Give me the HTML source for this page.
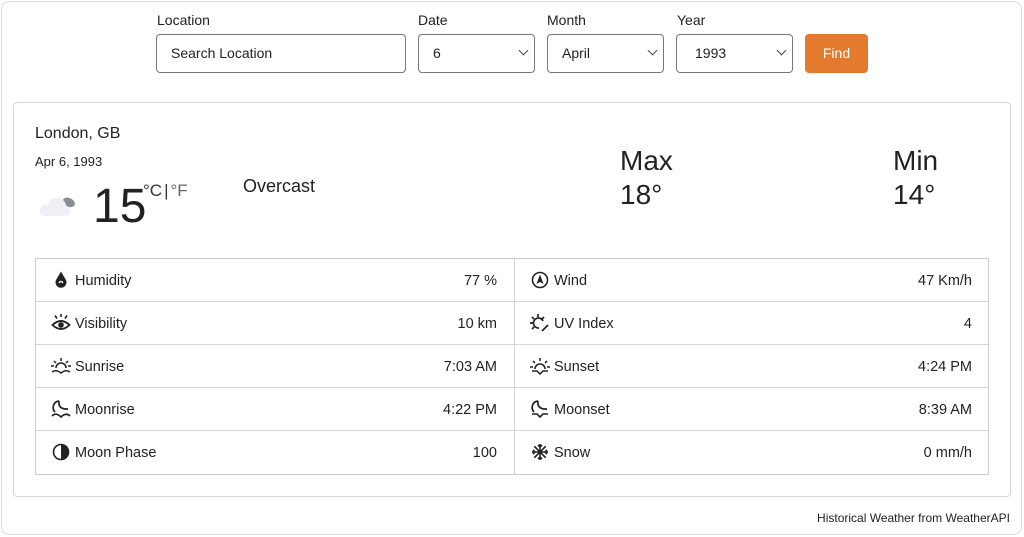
<!DOCTYPE html>
<html><head><meta charset="utf-8"><style>
*{box-sizing:border-box;margin:0;padding:0}
body{width:1024px;height:537px;background:#fff;font-family:"Liberation Sans",sans-serif;color:#222;position:relative;overflow:hidden}
.a{position:absolute}
.outer{left:1px;top:1px;width:1021px;height:534px;border:1px solid #ddd;border-radius:8px}
.lbl{font-size:14px;color:#222}
.inp{border:1px solid #777;border-radius:4px;height:39px;font-size:14px;padding:0 0 0 14px;line-height:37px;color:#222}
.chev{position:absolute;right:7px;top:12px;width:7px;height:7px;border-right:1.3px solid #444;border-bottom:1.3px solid #444;transform:rotate(45deg)}
.btn{left:805px;top:34px;width:63px;height:39px;background:#e47a2e;border-radius:4px;color:#fff;font-size:14px;text-align:center;line-height:39px}
.card{left:13px;top:102px;width:998px;height:395px;border:1px solid #d6d6d6;border-radius:4px}
.tbl{left:35px;top:258px;width:954px;height:217px;border:1px solid #ccc}
.hl{position:absolute;left:0;right:0;height:1px;background:#d4d4d4}
.vl{position:absolute;top:0;bottom:0;left:478px;width:1px;background:#d4d4d4}
.row{position:absolute;height:43px;font-size:14.5px;color:#222;line-height:47px}
.ic{position:absolute;top:13px;width:20px;height:18px}
.r{position:absolute;text-align:right}
</style></head><body>
<div class="a outer"></div>
<div class="a lbl" style="left:157px;top:12px">Location</div>
<div class="a lbl" style="left:418px;top:12px">Date</div>
<div class="a lbl" style="left:547px;top:12px">Month</div>
<div class="a lbl" style="left:677px;top:12px">Year</div>
<div class="a inp" style="left:156px;top:34px;width:250px">Search Location</div>
<div class="a inp" style="left:418px;top:34px;width:117px">6<span class="chev"></span></div>
<div class="a inp" style="left:547px;top:34px;width:117px">April<span class="chev"></span></div>
<div class="a inp" style="left:676px;top:34px;width:117px;padding-left:18px">1993<span class="chev"></span></div>
<div class="a btn">Find</div>

<div class="a card"></div>
<div class="a" style="left:35px;top:125px;font-size:16px">London, GB</div>
<div class="a" style="left:35px;top:154px;font-size:13px">Apr 6, 1993</div>
<svg class="a" style="left:38px;top:192px" width="40" height="26" viewBox="0 0 40 26"><path d="M24 10 Q26 4 31 6 Q36 7 37 12 Q36 16 30 15Z" fill="#8a8d94"/><path d="M6 24 Q0 23 2 17 Q4 12 10 13 Q13 4 21 6 Q28 8 28 15 Q34 16 32 21 Q31 24 27 24 Z" fill="#eef0f5"/></svg>
<div class="a" style="left:93px;top:179px;font-size:48px;color:#222">15</div>
<div class="a" style="left:143px;top:181px;font-size:17px;color:#333">°C<span style="margin:0 2px">|</span><span style="color:#666">°F</span></div>
<div class="a" style="left:243px;top:176px;font-size:18px">Overcast</div>
<div class="a" style="left:620px;top:144px;font-size:28px;line-height:34px">Max<br>18°</div>
<div class="a" style="left:893px;top:144px;font-size:28px;line-height:34px">Min<br>14°</div>

<div class="a tbl">
<div class="hl" style="top:42px"></div><div class="hl" style="top:85px"></div><div class="hl" style="top:128px"></div><div class="hl" style="top:171px"></div>
<div class="vl"></div>
</div>

<div class="a" style="left:35px;top:258px;width:479px">
<div class="row" style="top:0;left:0;width:479px"><svg class="ic" style="left:16px" viewBox="0 0 20 18"><path d="M10 0.5 L5 9 A5.5 5.5 0 1 0 15 9 Z" fill="#222"/><path d="M8 12 Q10 9 12 12" stroke="#fff" stroke-width="1.4" fill="none"/></svg><span style="position:absolute;left:40px">Humidity</span><span class="r" style="right:17px">77 %</span></div>
<div class="row" style="top:43px;left:0;width:479px"><svg class="ic" style="left:16px" viewBox="0 0 20 18"><path d="M1.5 11 Q10 3 18.5 11 Q10 19 1.5 11Z" stroke="#222" stroke-width="1.8" fill="none"/><circle cx="10" cy="11" r="2.8" fill="#222"/><path d="M10 0v3M4 1.5l2 3M16 1.5l-2 3" stroke="#222" stroke-width="1.6"/></svg><span style="position:absolute;left:40px">Visibility</span><span class="r" style="right:17px">10 km</span></div>
<div class="row" style="top:86px;left:0;width:479px"><svg class="ic" style="left:16px" viewBox="0 0 20 18"><path d="M5 11 A5 5 0 0 1 15 11" stroke="#222" stroke-width="1.6" fill="none"/><path d="M10 1v3M3 4l2 2M17 4l-2 2M0 9h3M17 9h3M1 15 Q5 12 10 16 Q15 12 19 15" stroke="#222" stroke-width="1.5" fill="none"/></svg><span style="position:absolute;left:40px">Sunrise</span><span class="r" style="right:17px">7:03 AM</span></div>
<div class="row" style="top:129px;left:0;width:479px"><svg class="ic" style="left:16px" viewBox="0 0 20 18"><path d="M8 1 A6.5 6.5 0 0 0 4 12 M8 1 Q7 8 14 9 L17 9" stroke="#222" stroke-width="1.7" fill="none"/><path d="M1 16 Q5 12 10 17 Q15 12 19 16" stroke="#222" stroke-width="1.6" fill="none"/></svg><span style="position:absolute;left:40px">Moonrise</span><span class="r" style="right:17px">4:22 PM</span></div>
<div class="row" style="top:172px;left:0;width:479px"><svg class="ic" style="left:16px" viewBox="0 0 20 18"><circle cx="10" cy="9" r="7.5" stroke="#222" stroke-width="1.6" fill="none"/><path d="M10 1.5 A7.5 7.5 0 0 1 10 16.5Z" fill="#222"/></svg><span style="position:absolute;left:40px">Moon Phase</span><span class="r" style="right:17px">100</span></div>
</div>
<div class="a" style="left:514px;top:258px;width:475px">
<div class="row" style="top:0;left:0;width:475px"><svg class="ic" style="left:16px" viewBox="0 0 20 18"><circle cx="10" cy="9" r="7.5" stroke="#222" stroke-width="1.6" fill="none"/><path d="M10 3.5 L6.5 13 L10 11 L13.5 13Z" fill="#222"/></svg><span style="position:absolute;left:40px">Wind</span><span class="r" style="right:17px">47 Km/h</span></div>
<div class="row" style="top:43px;left:0;width:475px"><svg class="ic" style="left:16px" viewBox="0 0 20 18"><path d="M13 7 A5 5 0 1 0 9 14" stroke="#222" stroke-width="1.7" fill="none"/><path d="M8 0v3M2 3l2 2M14 3l-2 2M0 9h3M2 15l2-2M12 17l6-6M13 12h.1M17 16h.1" stroke="#222" stroke-width="1.7"/></svg><span style="position:absolute;left:40px">UV Index</span><span class="r" style="right:17px">4</span></div>
<div class="row" style="top:86px;left:0;width:475px"><svg class="ic" style="left:16px" viewBox="0 0 20 18"><path d="M5 12 A5 5 0 0 1 15 12" stroke="#222" stroke-width="1.6" fill="none"/><path d="M10 1v3M3 4l2 2M17 4l-2 2M0 10h3M17 10h3M2 14 H7 L10 17 L13 14 H18" stroke="#222" stroke-width="1.5" fill="none"/></svg><span style="position:absolute;left:40px">Sunset</span><span class="r" style="right:17px">4:24 PM</span></div>
<div class="row" style="top:129px;left:0;width:475px"><svg class="ic" style="left:16px" viewBox="0 0 20 18"><path d="M8 1 A6.5 6.5 0 0 0 4 12 M8 1 Q7 8 14 9 L17 9" stroke="#222" stroke-width="1.7" fill="none"/><path d="M2 14 H7 L10 17 L13 14 H18" stroke="#222" stroke-width="1.6" fill="none"/></svg><span style="position:absolute;left:40px">Moonset</span><span class="r" style="right:17px">8:39 AM</span></div>
<div class="row" style="top:172px;left:0;width:475px"><svg class="ic" style="left:16px" viewBox="0 0 20 18"><g stroke="#222" stroke-width="1.6" fill="none"><path d="M10 1v16M2 9h16M4.3 3.3l11.4 11.4M15.7 3.3L4.3 14.7M8 2l2 2 2-2M8 16l2-2 2 2M3 7l2 2-2 2M17 7l-2 2 2 2"/></g></svg><span style="position:absolute;left:40px">Snow</span><span class="r" style="right:17px">0 mm/h</span></div>
</div>

<div class="a" style="right:14px;top:511px;font-size:12px;color:#222">Historical Weather from WeatherAPI</div>
</body></html>
